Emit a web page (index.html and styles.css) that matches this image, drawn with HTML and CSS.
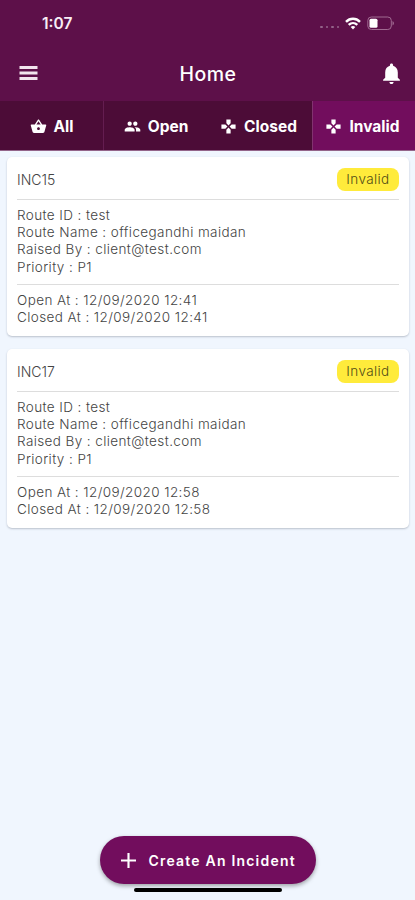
FILE: index.html
```html
<!DOCTYPE html>
<html lang="en">
<head>
<meta charset="utf-8">
<title>Home</title>
<link rel="stylesheet" href="styles.css">
</head>
<body>
<div class="screen">
  <header class="top">
    <div class="status">
      <span class="time">1:07</span>
      <div class="signals">
        <span class="dots"><i></i><i></i><i></i><i></i></span>
        <svg class="wifi" viewBox="0 0 16 13"><g fill="none" stroke="#fff" stroke-width="2.4"><path d="M1 4.8C5 .8 11 .8 15 4.8"/><path d="M3.700 7.800c2.500-2.300 6.100-2.300 8.600 0"/></g><path fill="#fff" d="M5.700 10c1.300-1.200 3.300-1.200 4.600 0L8 12.600z"/></svg>
        <svg class="battery" viewBox="0 0 28 15"><rect x=".8" y="1" width="23.500" height="12.500" rx="3.500" fill="none" stroke="#a06a91"/><rect x="2.500" y="2.800" width="8" height="9" rx="1.500" fill="#fff"/><path d="M25.500 5v4.600c2-1 2-3.600 0-4.600z" fill="#a06a91"/></svg>
      </div>
    </div>
    <div class="bar">
      <svg class="menu" viewBox="0 0 18 14"><path fill="#f2e4ee" d="M0 0h18v3H0zM0 5.500h18v3H0zM0 11h18v3H0z"/></svg>
      <h1>Home</h1>
      <svg class="bell" viewBox="4 2 16 20"><path fill="#fff" d="M12 22c1.100 0 2-.9 2-2h-4c0 1.100.9 2 2 2zm6-6v-5c0-3.070-1.640-5.640-4.500-6.320V4c0-.83-.67-1.500-1.500-1.500s-1.500.67-1.500 1.500v.68C7.630 5.360 6 7.920 6 11v5l-2 2v1h16v-1l-2-2z"/></svg>
    </div>
  </header>
  <nav class="tabs">
    <div class="tab"><svg viewBox="0 0 24 24"><path d="M17.210 9l-4.380-6.560c-.19-.28-.51-.42-.83-.42-.32 0-.64.14-.83.430L6.790 9H2c-.55 0-1 .45-1 1 0 .09.010.18.040.27l2.540 9.270c.23.84 1 1.460 1.920 1.460h13c.92 0 1.690-.62 1.930-1.460l2.540-9.270L23 10c0-.55-.45-1-1-1h-4.790zM9 9l3-4.400L15 9H9zm3 8c-1.100 0-2-.9-2-2s.9-2 2-2 2 .9 2 2-.9 2-2 2z"/></svg><span>All</span></div>
    <div class="tab line"><svg viewBox="0 0 24 24"><path d="M16 11c1.660 0 2.990-1.340 2.990-3S17.660 5 16 5s-3 1.340-3 3 1.340 3 3 3zm-8 0c1.660 0 2.990-1.340 2.990-3S9.660 5 8 5 5 6.340 5 8s1.340 3 3 3zm0 2c-2.330 0-7 1.170-7 3.500V19h14v-2.500c0-2.330-4.670-3.500-7-3.500zm8 0c-.29 0-.62.020-.97.050 1.160.84 1.970 1.970 1.970 3.450V19h6v-2.500c0-2.330-4.670-3.500-7-3.500z"/></svg><span>Open</span></div>
    <div class="tab closed"><svg viewBox="0 0 24 24"><path d="M15 7.500V2H9v5.500l3 3 3-3zM7.500 9H2v6h5.500l3-3-3-3zM9 16.500V22h6v-5.500l-3-3-3 3zM16.500 9l-3 3 3 3H22V9h-5.500z"/></svg><span>Closed</span></div>
    <div class="tab active"><svg viewBox="0 0 24 24"><path d="M15 7.500V2H9v5.500l3 3 3-3zM7.500 9H2v6h5.500l3-3-3-3zM9 16.500V22h6v-5.500l-3-3-3 3zM16.500 9l-3 3 3 3H22V9h-5.500z"/></svg><span>Invalid</span></div>
  </nav>
  <main>
    <article class="card">
      <div class="head"><span class="inc">INC15</span><span class="badge">Invalid</span></div>
      <div class="details"><p>Route ID : test</p><p>Route Name : officegandhi maidan</p><p>Raised By : client@test.com</p><p>Priority : P1</p></div>
      <div class="dates"><p>Open At : 12/09/2020 12:41</p><p>Closed At : 12/09/2020 12:41</p></div>
    </article>
    <article class="card">
      <div class="head"><span class="inc">INC17</span><span class="badge">Invalid</span></div>
      <div class="details"><p>Route ID : test</p><p>Route Name : officegandhi maidan</p><p>Raised By : client@test.com</p><p>Priority : P1</p></div>
      <div class="dates"><p>Open At : 12/09/2020 12:58</p><p>Closed At : 12/09/2020 12:58</p></div>
    </article>
  </main>
  <footer>
    <button class="create"><svg viewBox="0 0 14 14"><path fill="none" stroke="#fff" stroke-width="2" d="M7 0v14M0 7h14"/></svg><span>Create An Incident</span></button>
    <div class="home-bar"></div>
  </footer>
</div>
</body>
</html>
```

FILE: styles.css
```css
* { box-sizing: border-box; }
body, h1, p { margin: 0; }
body { font-family: Inter, sans-serif; background: #f0f6fe; }
.screen { height: 900px; display: flex; flex-direction: column; overflow: hidden; }
.top { height: 101px; flex: none; background: #5d1049; color: #fff; }
.status { height: 46px; padding: 0 20px 0 42px; display: flex; align-items: center; justify-content: space-between; }
.time { font-size: 15.5px; font-weight: 600; line-height: 20px; color: #f8edf5; padding-top: 1px; }
.signals { display: flex; align-items: center; }
.dots { display: flex; gap: 3px; margin: 8px 6px 0 0; }
.dots i { width: 2.5px; height: 2.5px; border-radius: 50%; background: #94648a; }
.wifi { width: 16px; height: 13px; margin-right: 6px; }
.battery { width: 28px; height: 15px; }
.bar { height: 54px; padding: 0 15px 0 19px; display: flex; align-items: center; justify-content: space-between; }
.menu { width: 19px; height: 14px; }
.bar h1 { font-size: 19.5px; font-weight: 500; letter-spacing: .5px; line-height: 24px; padding: 1px 5px 0 0; }
.bell { width: 17px; height: 21px; }
.tabs { height: 50px; flex: none; display: grid; grid-template-columns: 103px 105px 104px 103px; background: #4c0c37; border-bottom: 1px solid #93658a; }
.tab { display: flex; align-items: center; justify-content: center; gap: 7px; color: #fff; font-size: 15.5px; font-weight: 700; padding-top: 1px; }
.tab svg { width: 17px; height: 17px; fill: #fff; flex: none; }
.tab.line { border-left: 1px solid #641d50; }
.tab.closed { padding-right: 3px; }
.tab.active { background: #720d5d; border-left: 1px solid #81336f; padding-right: 3px; }
main { flex: 1; padding: 6px 6px 0 7px; }
.card { height: 179px; margin-bottom: 13px; padding: 0 10px; background: #fff; border-radius: 5px; box-shadow: 0 1px 2px rgba(60, 70, 90, .3); color: #444; font-size: 13.5px; font-weight: 300; }
.head { height: 43px; display: flex; align-items: center; justify-content: space-between; padding-top: 2px; border-bottom: 1px solid #ddd; }
.inc { font-size: 14px; }
.badge { width: 62px; height: 23px; border-radius: 8px; background: #ffeb3b; color: #504b16; display: flex; align-items: center; justify-content: center; font-size: 13.5px; letter-spacing: .4px; }
.details { height: 85px; padding-top: 7px; border-bottom: 1px solid #ddd; }
.dates { padding-top: 7px; }
.card p { line-height: 17.2px; letter-spacing: .4px; white-space: nowrap; }
footer { flex: none; height: 64px; display: flex; flex-direction: column; align-items: center; }
.create { width: 216px; height: 48px; border: 0; border-radius: 24px; background: #720d5d; color: #fff; box-shadow: 0 2px 4px rgba(0, 0, 0, .35); display: flex; align-items: center; padding: 0 0 0 21px; gap: 13px; font: 600 14px Inter, sans-serif; letter-spacing: 1.2px; white-space: nowrap; }
.create svg { width: 15px; height: 15px; flex: none; }
.home-bar { width: 148px; height: 4px; border-radius: 2px; background: #000; margin-top: 4px; }
```
